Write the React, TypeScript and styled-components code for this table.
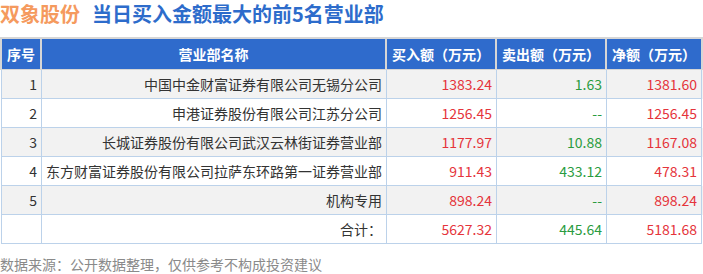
import React from "react";
import styled, { createGlobalStyle } from "styled-components";

const GlobalStyle = createGlobalStyle`
  html, body { margin: 0; padding: 0; background: #ffffff; }
  body { font-family: "Noto Sans CJK SC", "Noto Sans", sans-serif; }
`;

const COLS = "38px 343px 108px 108px 94px";
const BODY_COLS = "40px 345px 110px 110px 95px";

const Page = styled.div`
  width: 703px;
  height: 274px;
  overflow: hidden;
`;

const Title = styled.div`
  height: 37px;
  display: flex;
  align-items: flex-start;
  gap: 12px;
  font-size: 20px;
  line-height: 28px;
  font-weight: 700;
  white-space: nowrap;
`;

const Stock = styled.span`
  color: #f59a5e;
`;

const Headline = styled.span`
  color: #2d6ccb;
`;

const HeaderRow = styled.div`
  display: grid;
  grid-template-columns: ${COLS};
  gap: 2px;
  padding: 2px 2px 1px 2px;
  background: #d6d6d6;
  width: 703px;
  box-sizing: border-box;
`;

const HeadCell = styled.div`
  height: 30px;
  background: #2f6bcc;
  color: #ffffff;
  font-size: 14px;
  font-weight: 700;
  display: flex;
  align-items: center;
  justify-content: center;
  white-space: nowrap;
`;

const BodyRow = styled.div<{ $alt?: boolean }>`
  display: grid;
  grid-template-columns: ${BODY_COLS};
  margin-left: 1px;
  border-left: 1px solid #bcd2ea;
  background: ${(p) => (p.$alt ? "#f2f2f2" : "#ffffff")};
`;

const Cell = styled.div<{ $color?: string }>`
  height: 28px;
  border-right: 1px solid #bcd2ea;
  border-bottom: 1px solid #bcd2ea;
  display: flex;
  align-items: center;
  justify-content: flex-end;
  padding-right: 4px;
  font-size: 14px;
  color: ${(p) => p.$color || "#333333"};
  white-space: nowrap;
  overflow: hidden;
`;

const Footer = styled.div`
  margin-top: 11px;
  font-size: 14px;
  line-height: 18px;
  color: #8a8a8a;
  white-space: nowrap;
`;

const RED = "#e5343b";
const GREEN = "#2b9c3f";

type Row = { no: string; name: string; buy: string; sell: string; net: string };

const rows: Row[] = [
  { no: "1", name: "中国中金财富证券有限公司无锡分公司", buy: "1383.24", sell: "1.63", net: "1381.60" },
  { no: "2", name: "申港证券股份有限公司江苏分公司", buy: "1256.45", sell: "--", net: "1256.45" },
  { no: "3", name: "长城证券股份有限公司武汉云林街证券营业部", buy: "1177.97", sell: "10.88", net: "1167.08" },
  { no: "4", name: "东方财富证券股份有限公司拉萨东环路第一证券营业部", buy: "911.43", sell: "433.12", net: "478.31" },
  { no: "5", name: "机构专用", buy: "898.24", sell: "--", net: "898.24" },
  { no: "", name: "合计：", buy: "5627.32", sell: "445.64", net: "5181.68" },
];

export default function App() {
  return (
    <Page>
      <GlobalStyle />
      <Title>
        <Stock>双象股份</Stock>
        <Headline>当日买入金额最大的前5名营业部</Headline>
      </Title>
      <HeaderRow>
        <HeadCell>序号</HeadCell>
        <HeadCell>营业部名称</HeadCell>
        <HeadCell>买入额（万元）</HeadCell>
        <HeadCell>卖出额（万元）</HeadCell>
        <HeadCell>净额（万元）</HeadCell>
      </HeaderRow>
      {rows.map((r, i) => (
        <BodyRow key={i} $alt={i % 2 === 0 && i < 5}>
          <Cell>{r.no}</Cell>
          <Cell>{r.name}</Cell>
          <Cell $color={RED}>{r.buy}</Cell>
          <Cell $color={GREEN}>{r.sell}</Cell>
          <Cell $color={RED}>{r.net}</Cell>
        </BodyRow>
      ))}
      <Footer>数据来源：公开数据整理，仅供参考不构成投资建议</Footer>
    </Page>
  );
}
